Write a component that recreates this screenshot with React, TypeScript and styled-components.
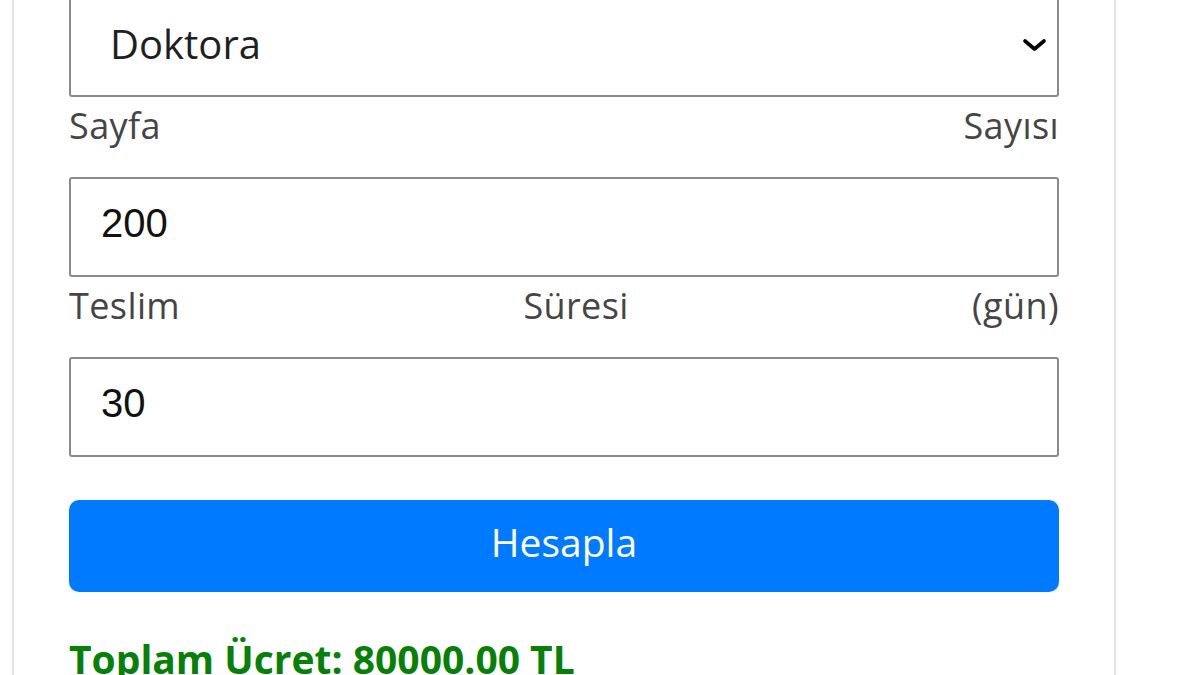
import React, { useState } from 'react';
import styled, { createGlobalStyle } from 'styled-components';

const GlobalStyle = createGlobalStyle`
  html, body {
    margin: 0;
    padding: 0;
    background: #fff;
    overflow: hidden;
  }
  body {
    font-family: "Open Sans", "Liberation Sans", sans-serif;
  }
`;

const Page = styled.div`
  margin-top: -3px;
  padding-left: 12px;
`;

const Card = styled.div`
  width: 1104px;
  box-sizing: border-box;
  border: 2px solid #e3e3e3;
  border-top: none;
  padding: 0 55px 40px;
  background: #fff;
`;

const SelectWrap = styled.div`
  position: relative;
`;

const Select = styled.select`
  display: block;
  width: 100%;
  height: 100px;
  box-sizing: border-box;
  appearance: none;
  -webkit-appearance: none;
  background: #fff;
  border: 2px solid #8a8a8a;
  border-radius: 3px;
  padding: 0 80px 8px 39px;
  font-family: "Open Sans", "Liberation Sans", sans-serif;
  font-size: 40px;
  color: #1f1f1f;
  outline: none;
`;

const Chevron = styled.svg`
  position: absolute;
  right: 12px;
  top: 41px;
  width: 25px;
  height: 14px;
  pointer-events: none;
`;

const Label = styled.label`
  display: block;
  height: 60px;
  line-height: 58px;
  margin-bottom: 20px;
  font-size: 36px;
  letter-spacing: 0.4px;
  color: #454545;
  text-align: justify;
  text-align-last: justify;
`;

const Input = styled.input`
  display: block;
  width: 100%;
  height: 100px;
  box-sizing: border-box;
  border: 2px solid #8a8a8a;
  border-radius: 3px;
  padding: 0 30px 8px;
  font-family: "Liberation Sans", Arial, sans-serif;
  font-size: 40px;
  color: #111;
  outline: none;
`;

const Button = styled.button`
  display: block;
  width: 100%;
  height: 92px;
  margin-top: 43px;
  padding: 0 0 9px;
  border: none;
  border-radius: 10px;
  background: #007bff;
  color: #fff;
  font-family: "Open Sans", "Liberation Sans", sans-serif;
  font-size: 39px;
  cursor: pointer;
`;

const Result = styled.p`
  margin: 40px 0 0;
  font-size: 39px;
  line-height: 54px;
  font-weight: 700;
  color: #078007;
`;

export default function App() {
  const [level, setLevel] = useState('doktora');
  const [pages, setPages] = useState('200');
  const [days, setDays] = useState('30');

  return (
    <Page>
      <GlobalStyle />
      <Card>
        <SelectWrap>
          <Select value={level} onChange={(e) => setLevel(e.target.value)}>
            <option value="lisans">Lisans</option>
            <option value="yuksek">Yüksek Lisans</option>
            <option value="doktora">Doktora</option>
          </Select>
          <Chevron viewBox="0 0 25 14" fill="none">
            <path d="M3 3 L12.5 11 L22 3" stroke="#000" strokeWidth={3.6} strokeLinecap="round" strokeLinejoin="round" />
          </Chevron>
        </SelectWrap>
        <Label>Sayfa Sayısı</Label>
        <Input value={pages} onChange={(e) => setPages(e.target.value)} />
        <Label>Teslim Süresi (gün)</Label>
        <Input value={days} onChange={(e) => setDays(e.target.value)} />
        <Button>Hesapla</Button>
        <Result>Toplam Ücret: 80000.00 TL</Result>
      </Card>
    </Page>
  );
}
